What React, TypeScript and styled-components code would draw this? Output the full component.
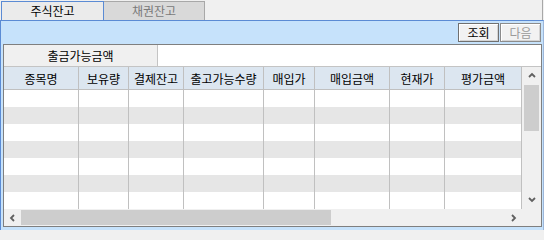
import React from "react";
import styled, { createGlobalStyle } from "styled-components";

const GlobalStyle = createGlobalStyle`
  html, body {
    margin: 0;
    padding: 0;
    background: #f0f0f0;
  }
  body {
    font-family: "Noto Sans CJK KR", "Noto Sans", sans-serif;
    font-size: 12px;
    color: #000;
  }
`;

const columns = [
  { title: "종목명", width: 75 },
  { title: "보유량", width: 50 },
  { title: "결제잔고", width: 55 },
  { title: "출고가능수량", width: 80 },
  { title: "매입가", width: 51 },
  { title: "매입금액", width: 75 },
  { title: "현재가", width: 55 },
  { title: "평가금액", width: 77 },
];
const gridTemplate = columns.map((c) => `${c.width}px`).join(" ");
const rowCount = 7;

const Chevron = ({ dir }: { dir: "up" | "down" | "left" | "right" }) => {
  const points = {
    up: "1,5 4,2 7,5",
    down: "1,2 4,5 7,2",
    left: "5,1 2,4 5,7",
    right: "2,1 5,4 2,7",
  }[dir];
  return (
    <svg width="8" height="8" viewBox="0 0 8 8">
      <polyline points={points} fill="none" stroke="#606060" strokeWidth="1.8" />
    </svg>
  );
};

const App = () => {
  return (
    <>
      <GlobalStyle />
      <Window>
        <TabStrip>
          <Tab $active>주식잔고</Tab>
          <Tab>채권잔고</Tab>
        </TabStrip>
        <BluePanel>
          <Toolbar>
            <Button>조회</Button>
            <Button disabled>다음</Button>
          </Toolbar>
          <GridPanel>
            <SummaryRow>
              <SummaryLabel>출금가능금액</SummaryLabel>
              <SummaryValue />
            </SummaryRow>
            <TableArea>
              <Table>
                <HeaderRow>
                  {columns.map((c) => (
                    <HeaderCell key={c.title}>{c.title}</HeaderCell>
                  ))}
                </HeaderRow>
                {Array.from({ length: rowCount }).map((_, i) => (
                  <DataRow key={i} $striped={i % 2 === 1}>
                    {columns.map((c) => (
                      <DataCell key={c.title} />
                    ))}
                  </DataRow>
                ))}
              </Table>
              <VScroll>
                <ArrowButton $vertical>
                  <Chevron dir="up" />
                </ArrowButton>
                <VTrack>
                  <VThumb />
                  <ArrowButton $vertical>
                    <Chevron dir="down" />
                  </ArrowButton>
                </VTrack>
              </VScroll>
            </TableArea>
            <HScrollRow>
              <HScroll>
                <ArrowButton>
                  <Chevron dir="left" />
                </ArrowButton>
                <HThumb />
                <HSpacer />
                <ArrowButton>
                  <Chevron dir="right" />
                </ArrowButton>
              </HScroll>
              <Corner />
            </HScrollRow>
          </GridPanel>
        </BluePanel>
      </Window>
    </>
  );
};

export default App;

const Window = styled.div`
  width: 544px;
  height: 230px;
  display: flex;
  flex-direction: column;
  box-sizing: border-box;
  overflow: hidden;
`;

const TabStrip = styled.div`
  height: 20px;
  display: flex;
  align-items: flex-end;
  padding-left: 1px;
  box-sizing: border-box;
  border-right: 1px solid #a8a8a8;
  margin-right: 1px;
`;

const Tab = styled.div<{ $active?: boolean }>`
  box-sizing: border-box;
  height: 19px;
  width: ${(p) => (p.$active ? "103px" : "101px")};
  display: flex;
  align-items: center;
  justify-content: center;
  line-height: 1;
  background: ${(p) => (p.$active ? "#ebebeb" : "#d9d9d9")};
  color: ${(p) => (p.$active ? "#000" : "#7a7a7a")};
  border: 1px solid ${(p) => (p.$active ? "#5b8bd4" : "#a8a8a8")};
  border-bottom: none;
  ${(p) => (p.$active ? "" : "border-left: none;")}
`;

const BluePanel = styled.div`
  flex: 1;
  background: #c6e2fb;
  border: 1px solid #5b8bd4;
  border-bottom: none;
  border-right-color: #9db7da;
  padding: 2px 1px 3px 2px;
  display: flex;
  flex-direction: column;
  box-sizing: border-box;
`;

const Toolbar = styled.div`
  display: flex;
  justify-content: flex-end;
  gap: 1px;
  padding-right: 1px;
  margin-bottom: 2px;
`;

const Button = styled.button`
  box-sizing: border-box;
  width: 41px;
  height: 19px;
  padding: 0;
  margin: 0;
  font-family: inherit;
  font-size: 12px;
  line-height: 1;
  background: #f2f2f2;
  color: #000;
  border: 1px solid #707070;
  box-shadow: inset 1px 1px 0 #ffffff, inset -1px -1px 0 #d4d4d4;
  &:disabled {
    color: #9a9a9a;
    border-color: #8c8c8c;
  }
`;

const GridPanel = styled.div`
  box-sizing: border-box;
  width: 539px;
  height: 183px;
  border: 1px solid #7f7f7f;
  background: #ffffff;
  display: flex;
  flex-direction: column;
`;

const SummaryRow = styled.div`
  height: 22px;
  display: flex;
  box-sizing: border-box;
  border-bottom: 1px solid #c4c4c4;
`;

const SummaryLabel = styled.div`
  width: 154px;
  box-sizing: border-box;
  background: #f0f0f0;
  border-right: 1px solid #c4c4c4;
  display: flex;
  align-items: center;
  justify-content: center;
`;

const SummaryValue = styled.div`
  flex: 1;
  background: #ffffff;
`;

const TableArea = styled.div`
  display: flex;
  height: 142px;
`;

const Table = styled.div`
  width: 518px;
  display: flex;
  flex-direction: column;
`;

const HeaderRow = styled.div`
  display: grid;
  grid-template-columns: ${gridTemplate};
  height: 23px;
  box-sizing: border-box;
  background: #dce6f0;
  border-bottom: 1px solid #c0c0c0;
`;

const HeaderCell = styled.div`
  box-sizing: border-box;
  border-right: 1px solid #c0c0c0;
  display: flex;
  align-items: center;
  justify-content: center;
  white-space: nowrap;
`;

const DataRow = styled.div<{ $striped: boolean }>`
  display: grid;
  grid-template-columns: ${gridTemplate};
  height: 17px;
  background: ${(p) => (p.$striped ? "#e6e6e6" : "#ffffff")};
`;

const DataCell = styled.div`
  box-sizing: border-box;
  border-right: 1px solid #c0c0c0;
`;

const VScroll = styled.div`
  width: 19px;
  background: #f0f0f0;
  display: flex;
  flex-direction: column;
`;

const VTrack = styled.div`
  flex: 1;
  display: flex;
  flex-direction: column;
  justify-content: space-between;
`;

const VThumb = styled.div`
  margin: 0 2px;
  height: 46px;
  background: #cdcdcd;
`;

const ArrowButton = styled.div<{ $vertical?: boolean }>`
  flex: none;
  width: ${(p) => (p.$vertical ? "19px" : "17px")};
  height: ${(p) => (p.$vertical ? "18px" : "17px")};
  display: flex;
  align-items: center;
  justify-content: center;
`;

const HScrollRow = styled.div`
  display: flex;
  height: 17px;
`;

const HScroll = styled.div`
  width: 518px;
  display: flex;
  align-items: center;
  background: #f0f0f0;
`;

const HThumb = styled.div`
  width: 310px;
  height: 15px;
  background: #cdcdcd;
`;

const HSpacer = styled.div`
  flex: 1;
`;

const Corner = styled.div`
  flex: 1;
  background: #f0f0f0;
`;
